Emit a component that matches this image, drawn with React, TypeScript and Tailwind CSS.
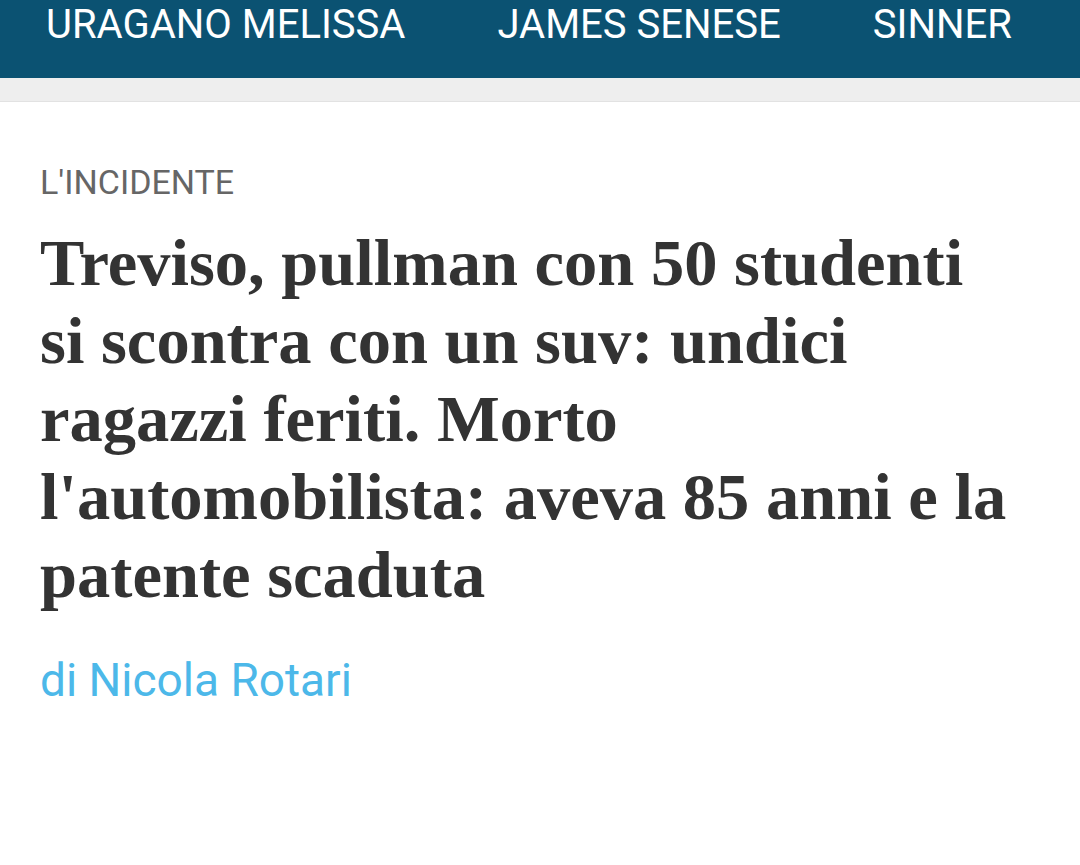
export default function App() {
  const nav = ['URAGANO MELISSA', 'JAMES SENESE', 'SINNER'];

  return (
    <div className="min-h-[865px] bg-white font-['Roboto',sans-serif]">
      <nav className="h-[78px] bg-[#0b5272] flex items-start gap-[92px] pl-[46px] overflow-hidden">
        {nav.map((item) => (
          <a key={item} className="text-white text-[40px] leading-[50px] whitespace-nowrap">
            {item}
          </a>
        ))}
      </nav>
      <div className="h-[24px] bg-[#eeeeee] border-b border-[#e2e2e2]" />

      <article className="px-[40px] pt-[60px]">
        <p className="text-[#666666] text-[34px] leading-[40px]">L'INCIDENTE</p>
        <h1 className="mt-[22px] text-[#333333] font-bold font-['Liberation_Serif',serif] text-[66.5px] leading-[78px]">
          Treviso, pullman con 50 studenti
          <br />
          si scontra con un suv: undici
          <br />
          ragazzi feriti. Morto
          <br />
          l'automobilista: aveva 85 anni e la
          <br />
          patente scaduta
        </h1>
        <p className="mt-[40px] text-[#4cb8e9] text-[46px] leading-[52px]">di Nicola Rotari</p>
      </article>
    </div>
  );
}
